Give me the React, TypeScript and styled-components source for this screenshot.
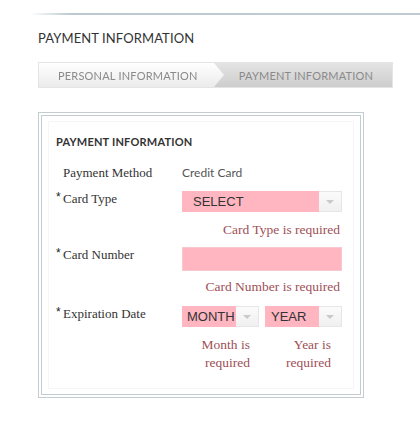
import React from 'react'
import styled, { createGlobalStyle } from 'styled-components'

const GlobalStyle = createGlobalStyle`
  html, body {
    margin: 0;
    padding: 0;
    background: #fff;
  }
  body {
    font-family: 'Lato', 'Liberation Sans', sans-serif;
    color: #333;
  }
`

const Page = styled.div`
  width: 420px;
  height: 445px;
  overflow: hidden;
  padding-top: 13px;
  box-sizing: border-box;
`

const TopRule = styled.div`
  height: 2px;
  margin-left: 30px;
  background: linear-gradient(to right, rgba(190, 205, 211, 0) 0, #bccacf 40px, #bfcbd0 100%);
`

const Content = styled.div`
  padding-left: 38px;
`

const Title = styled.h2`
  margin: 15px 0 0;
  font-size: 13px;
  font-weight: 400;
  line-height: 16px;
  color: #333;
  letter-spacing: 0.1px;
`

const Steps = styled.div`
  display: flex;
  width: 355px;
  height: 26px;
  margin-top: 16px;
  box-sizing: border-box;
  border: 1px solid #e4e4e4;
  background: linear-gradient(to bottom, #e4e4e4, #cdcdcd);
`

const Step = styled.div<{ $active?: boolean }>`
  display: flex;
  align-items: center;
  font-size: 11px;
  color: #8a8a8a;
  letter-spacing: 0.2px;
  ${(p) =>
    p.$active
      ? `
    flex: 1;
    justify-content: center;
    padding-right: 4px;
  `
      : `
    width: 185px;
    padding-left: 19px;
    box-sizing: border-box;
    background: linear-gradient(to bottom, #ffffff, #ebebeb);
    clip-path: polygon(0 0, calc(100% - 10px) 0, 100% 50%, calc(100% - 10px) 100%, 0 100%);
    filter: drop-shadow(1px 0 0 #f4f4f4);
  `}
`

const Box = styled.div`
  width: 326px;
  height: 286px;
  margin-top: 24px;
  box-sizing: border-box;
  border: 4px double #c3ccd0;
  padding: 5px 6px;
`

const Panel = styled.div`
  height: 100%;
  box-sizing: border-box;
  border: 1px solid #f6f6f6;
  padding: 13px 0 0 7px;
`

const Heading = styled.h3`
  margin: 0;
  font-size: 11px;
  font-weight: 700;
  line-height: 14px;
  color: #333;
  letter-spacing: 0.2px;
`

const Row = styled.div<{ $top: number }>`
  display: grid;
  grid-template-columns: 126px 160px;
  margin-top: ${(p) => p.$top}px;
  align-items: start;
`

const Label = styled.div<{ $required?: boolean }>`
  position: relative;
  padding-left: 7px;
  font-family: 'Liberation Serif', 'Times New Roman', serif;
  font-size: 13px;
  line-height: 16px;
  color: #333;
  &::before {
    content: ${(p) => (p.$required ? "'*'" : "''")};
    position: absolute;
    left: 0;
    top: -2px;
    font-family: 'Liberation Sans', sans-serif;
    font-size: 12px;
    color: #222;
  }
`

const Value = styled.div`
  font-size: 12px;
  line-height: 16px;
  color: #555;
`

const Fields = styled.div`
  display: flex;
  gap: 6px;
`

const Select = styled.div<{ $width: number }>`
  display: flex;
  width: ${(p) => p.$width}px;
  height: 21px;
`

const SelectValue = styled.div<{ $pad: number }>`
  flex: 1;
  display: flex;
  align-items: center;
  padding-left: ${(p) => p.$pad}px;
  background: #ffb6c1;
  font-family: 'Liberation Sans', Arial, sans-serif;
  font-size: 13px;
  color: #333;
`

const SelectArrow = styled.div`
  width: 23px;
  box-sizing: border-box;
  border: 1px solid #e6e6e6;
  border-left: none;
  background: linear-gradient(to bottom, #fbfbfb, #f0f0f0);
  display: flex;
  align-items: center;
  justify-content: center;
  &::after {
    content: '';
    border-left: 4px solid transparent;
    border-right: 4px solid transparent;
    border-top: 4px solid #c9c9c9;
  }
`

const TextInput = styled.div`
  width: 160px;
  height: 24px;
  box-sizing: border-box;
  background: #ffb6c1;
  border: 1px solid #f6c9cf;
`

const ErrorRow = styled.div<{ $top: number }>`
  display: grid;
  grid-template-columns: 126px 160px;
  margin-top: ${(p) => p.$top}px;
`

const Error = styled.div<{ $padRight?: number }>`
  text-align: right;
  padding-right: ${(p) => p.$padRight ?? 2}px;
  font-family: 'Liberation Serif', 'Times New Roman', serif;
  font-size: 13.5px;
  line-height: 18px;
  color: #9e4f57;
`

const ErrorCell = styled.div`
  grid-column: 2;
`

const SplitErrors = styled.div`
  grid-column: 2;
  display: grid;
  grid-template-columns: 78px 78px;
  column-gap: 6px;
`

export default function App() {
  return (
    <Page>
      <GlobalStyle />
      <TopRule />
      <Content>
        <Title>PAYMENT INFORMATION</Title>
        <Steps>
          <Step>PERSONAL INFORMATION</Step>
          <Step $active>PAYMENT INFORMATION</Step>
        </Steps>
        <Box>
          <Panel>
            <Heading>PAYMENT INFORMATION</Heading>
            <Row $top={16}>
              <Label>Payment Method</Label>
              <Value>Credit Card</Value>
            </Row>
            <Row $top={10}>
              <Label $required>Card Type</Label>
              <Select $width={160}>
                <SelectValue $pad={11}>SELECT</SelectValue>
                <SelectArrow />
              </Select>
            </Row>
            <ErrorRow $top={9}>
              <ErrorCell>
                <Error>Card Type is required</Error>
              </ErrorCell>
            </ErrorRow>
            <Row $top={8}>
              <Label $required>Card Number</Label>
              <TextInput />
            </Row>
            <ErrorRow $top={7}>
              <ErrorCell>
                <Error>Card Number is required</Error>
              </ErrorCell>
            </ErrorRow>
            <Row $top={10}>
              <Label $required>Expiration Date</Label>
              <Fields>
                <Select $width={78}>
                  <SelectValue $pad={5}>MONTH</SelectValue>
                  <SelectArrow />
                </Select>
                <Select $width={78}>
                  <SelectValue $pad={6}>YEAR</SelectValue>
                  <SelectArrow />
                </Select>
              </Fields>
            </Row>
            <ErrorRow $top={9}>
              <SplitErrors>
                <Error $padRight={10}>
                  Month is
                  <br />
                  required
                </Error>
                <Error $padRight={13}>
                  Year is
                  <br />
                  required
                </Error>
              </SplitErrors>
            </ErrorRow>
          </Panel>
        </Box>
      </Content>
    </Page>
  )
}
